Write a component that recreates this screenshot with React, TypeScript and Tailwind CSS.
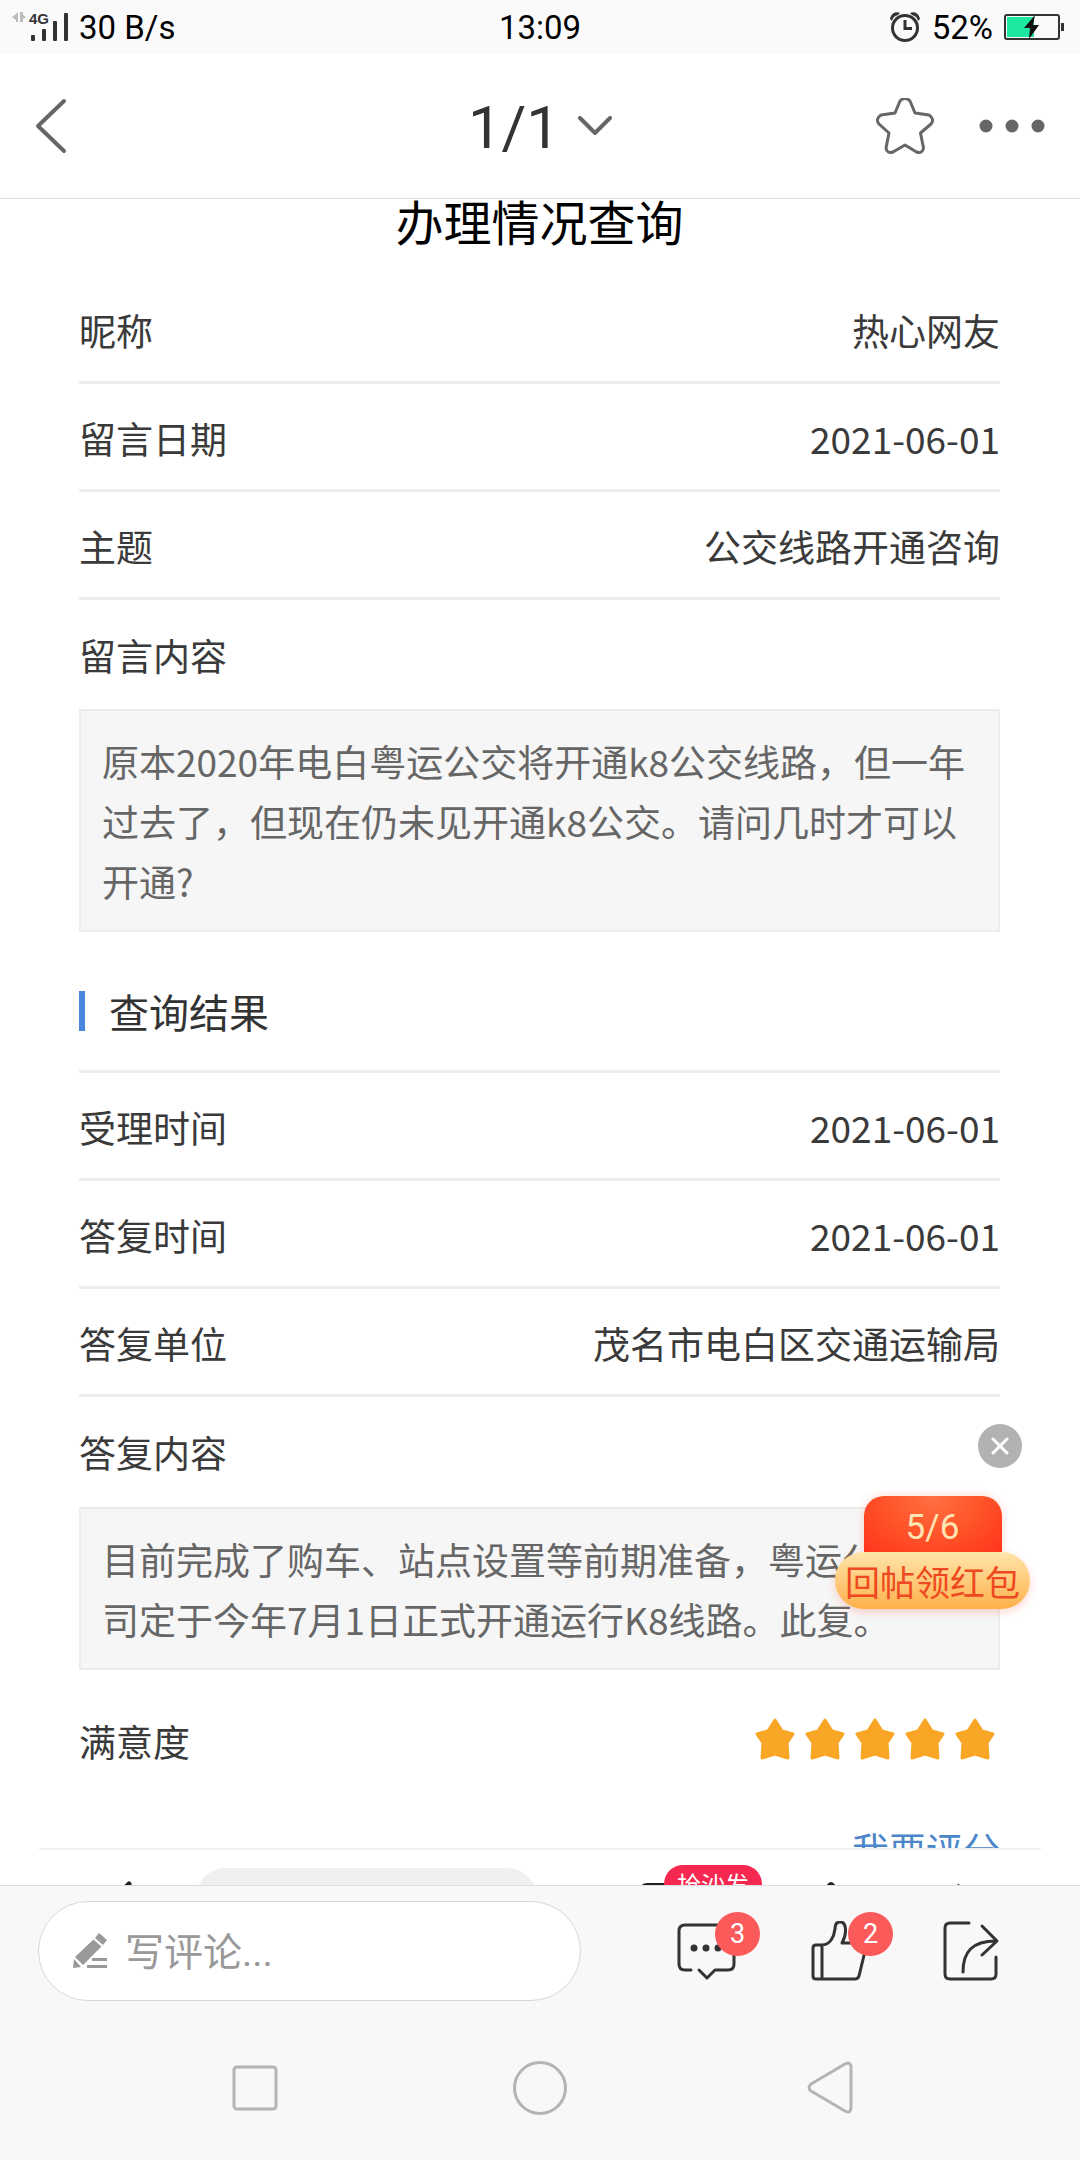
import { memo } from "react";

const queryFields = [
  { label: "昵称", value: "热心网友" },
  { label: "留言日期", value: "2021-06-01" },
  { label: "主题", value: "公交线路开通咨询" },
];

const resultFields = [
  { label: "受理时间", value: "2021-06-01" },
  { label: "答复时间", value: "2021-06-01" },
  { label: "答复单位", value: "茂名市电白区交通运输局" },
];

function StatusBar() {
  return (
    <div className="grid h-[54px] grid-cols-[1fr_auto_1fr] items-center bg-[#fafafa] text-[33px] leading-none text-black">
      <div className="flex items-center gap-[11px] pl-3">
        <svg width="56" height="34" viewBox="0 -2 56 34" fill="#333">
          <path d="M6 0v10H4V8L0 5l4-3zM8 0h3v3l3 2-3 2v3H8z" fill="#bbb" />
          <text x="17" y="12" className="font-['Liberation_Sans'] text-[15px] font-bold">
            4G
          </text>
          <rect x="19" y="23" width="4" height="6" rx="1" />
          <rect x="30" y="17" width="4" height="12" rx="1" />
          <rect x="41" y="9" width="4" height="20" rx="1" />
          <rect x="52" y="1" width="4" height="28" rx="1" />
        </svg>
        <span>30 B/s</span>
      </div>
      <span>13:09</span>
      <div className="flex items-center justify-end gap-[11px] pr-[15px]">
        <svg width="31" height="30" viewBox="0 0 31 30" fill="none" stroke="#333" strokeWidth="3">
          <circle cx="15" cy="16" r="12.5" />
          <path d="M15 8v8.5h7" />
          <path d="M0 7C1 2 5-1 10 1L8 3C5 4 3 5 2 9zM30 7C29 2 25-1 20 1l2 2c3 1 5 2 6 6z" fill="#333" stroke="none" />
        </svg>
        <span>52%</span>
        <svg width="61" height="26" viewBox="0 0 61 26">
          <rect x="1" y="1" width="54" height="24" rx="2" fill="none" stroke="#333" strokeWidth="2" />
          <path d="M3 3h27v20H3z" fill="#1deaa0" />
          <path d="M31 1 20 14h6l-1 11 10-14h-6z" fill="#111" />
          <rect x="57" y="9" width="3" height="8" fill="#333" />
        </svg>
      </div>
    </div>
  );
}

function Header() {
  return (
    <header className="grid h-[145px] grid-cols-[1fr_auto_1fr] items-center border-b border-[#dcdcdc] bg-white">
      <button aria-label="返回" className="justify-self-start pl-[35px]">
        <svg width="32" height="56" viewBox="0 0 32 56" fill="none" stroke="#666" strokeWidth="4" strokeLinecap="round" strokeLinejoin="round">
          <path d="M29 3 3 28l26 25" />
        </svg>
      </button>
      <button className="flex items-center gap-[18px] text-[60px] leading-none text-[#333]">
        <span className="pt-1">1/1</span>
        <svg width="34" height="20" viewBox="0 0 34 20" fill="none" stroke="#666" strokeWidth="4" strokeLinecap="round" strokeLinejoin="round">
          <path d="m2 2 15 15L32 2" />
        </svg>
      </button>
      <div className="flex items-center gap-[45px] justify-self-end pr-[35px]">
        <button aria-label="收藏">
          <svg width="58" height="57" viewBox="0 1 58 57" fill="none" stroke="#666" strokeWidth="3" strokeLinejoin="round">
            <path d="M24 4q5-5 10 0l5 12 14 2q6 4 2 9L44.500 36l3 15q-1 6-7 4L29 48l-12 7q-6 2-7-4l3-15L3 27q-4-5 2-9l14-2z" />
          </svg>
        </button>
        <button aria-label="更多">
          <svg width="66" height="14" viewBox="0 0 66 14" fill="#666">
            <circle cx="7" cy="7" r="6.500" />
            <circle cx="33" cy="7" r="6.500" />
            <circle cx="59" cy="7" r="6.500" />
          </svg>
        </button>
      </div>
    </header>
  );
}

function FieldRow({ label, value }: { label: string; value: string }) {
  return (
    <div className="flex h-[108px] items-center justify-between border-b-3 border-[#eee] pt-[2px]">
      <dt>{label}</dt>
      <dd>{value}</dd>
    </div>
  );
}

function MessageBox({ children }: { children: string }) {
  return (
    <p className="border-2 border-[#ececec] bg-[#f6f6f6] px-[21px] pt-5 pb-[19px] leading-[60px] text-[#666]">
      {children}
    </p>
  );
}

function RatingStar() {
  return (
    <svg width="40" height="42" viewBox="0 0 40 42" fill="#f9a626" stroke="#f9a626" strokeWidth="3" strokeLinejoin="round">
      <path d="m20 2 7 11 11 3-6 9 1 15-13-4-13 4 1-15-6-9 11-3z" />
    </svg>
  );
}

// Only the top edge of this toolbar shows above the comment bar
function PostToolbar() {
  return (
    <div className="mx-[39px] flex h-[37px] items-start overflow-hidden border-t-2 border-[#f0f0f0]">
      <svg className="mt-[31px] ml-[72px] shrink-0" width="21" height="34" viewBox="0 0 21 34" fill="none" stroke="#222" strokeWidth="5" strokeLinecap="round">
        <path d="M18 3 4 17l14 14" />
      </svg>
      <div className="mt-[18px] ml-16 h-[60px] grow rounded-full bg-[#f0f0f0]" />
      <div className="relative mt-[33px] ml-[102px] h-10 w-12 shrink-0 rounded-lg border-3 border-[#222]">
        <span className="absolute -top-[21px] left-[22px] w-[98px] rounded-full bg-[#f42850] text-center text-[24px] leading-[38px] text-white">
          抢沙发
        </span>
      </div>
      <svg className="mt-[31px] ml-[134px] shrink-0" width="20" height="30" viewBox="0 0 20 30" fill="none" stroke="#222" strokeWidth="4">
        <path d="M2 28 7 6q3-6 6 0l5 22" />
      </svg>
      <svg className="mt-[33px] mr-[72px] ml-[108px] shrink-0" width="20" height="30" viewBox="0 0 20 30" fill="none" stroke="#222" strokeWidth="4">
        <path d="m8 2 10 12" />
      </svg>
    </div>
  );
}

function RedPacket() {
  return (
    <aside className="absolute right-[50px] bottom-[276px] flex w-[195px] flex-col items-center">
      <button aria-label="关闭" className="mr-2 mb-7 flex size-11 items-center justify-center self-end rounded-full bg-[#b2b2b2]">
        <svg width="18" height="18" viewBox="0 0 18 18" stroke="#fff" strokeWidth="3" strokeLinecap="round">
          <path d="m2 2 14 14M16 2 2 16" />
        </svg>
      </button>
      <div className="h-14 w-[138px] rounded-t-[20px] bg-[radial-gradient(ellipse_at_50%_0%,#ff7043_0%,#ff5429_50%,#ff351c_100%)] pt-1 text-center font-[Roboto] text-[35px] leading-[56px] text-[#ffe5b4] shadow-[0_0_8px_#ff50303d]">
        5/6
      </div>
      <button className="h-[57px] w-full rounded-full bg-linear-to-b from-[#fee5a9] to-[#fdb046] text-[35px] leading-[57px] whitespace-nowrap text-[#ee4920] shadow-[0_3px_8px_#ff50303d]">
        回帖领红包
      </button>
    </aside>
  );
}

function CountBadge({ count }: { count: number }) {
  return (
    <span className="absolute -top-[9px] left-[38px] h-11 w-[45px] rounded-full bg-[#fa5a5a] text-center text-[27px] leading-[44px] text-white">
      {count}
    </span>
  );
}

function CommentBar() {
  return (
    <footer className="flex items-center border-t border-[#dedede] bg-[#f9f7f8] py-[15px] pr-[77px] pl-[38px]">
      <label className="mr-24 flex h-[100px] min-w-0 flex-1 items-center gap-[17px] rounded-full border border-[#d5dad5] bg-white px-[34px]">
        <svg className="shrink-0" width="35" height="36" viewBox="0 0 35 36" fill="#999">
          <path d="m26 0 8 7-4 5-8-7zM20.500 6.500l8 7L10 32l-8-8zM1 26l7 8-8 1zM19 25h15v3H19zM14 32h20v3H14z" />
        </svg>
        <input
          aria-label="写评论"
          placeholder="写评论..."
          className="w-full min-w-0 pt-1 text-[39px] outline-none placeholder:text-[#999]"
        />
      </label>
      <div className="flex items-center gap-[73px]">
        <button aria-label="评论" className="relative">
          <svg width="60" height="60" viewBox="0 0 60 60" fill="none" stroke="#333" strokeWidth="3" strokeLinecap="round" strokeLinejoin="round">
            <path d="M14 49H8q-6 0-6-6V10q0-6 6-6h43q6 0 6 6v33q0 6-6 6H38l-8 8-8-8" />
            <g fill="#333" stroke="none">
              <circle cx="17" cy="27" r="3.500" />
              <circle cx="29" cy="27" r="3.500" />
              <circle cx="41" cy="27" r="3.500" />
            </g>
          </svg>
          <CountBadge count={3} />
        </button>
        <button aria-label="点赞" className="relative">
          <svg width="60" height="60" viewBox="0 0 60 60" fill="none" stroke="#333" strokeWidth="3" strokeLinecap="round" strokeLinejoin="round">
            <path d="M12 24v34M12 24H6q-3 0-3 3v28q0 3 3 3h39q3 0 4-3l7-29q0-4-4-4H32c5-9 5-21-2-21-4 0-5 3-5 7-1 8-5 16-13 16" />
          </svg>
          <CountBadge count={2} />
        </button>
        <button aria-label="分享">
          <svg width="60" height="60" viewBox="0 0 60 60" fill="none" stroke="#333" strokeWidth="3" strokeLinecap="round" strokeLinejoin="round">
            <path d="M26 2H7Q2 2 2 7v46q0 5 5 5h41q5 0 5-5V36M20 51c0-20 9-31 33-31M39 5l15 15-15 14" />
          </svg>
        </button>
      </div>
    </footer>
  );
}

function SystemNav() {
  return (
    <nav className="flex h-36 items-center justify-between bg-[#f8f8f8] px-[226px]">
      <button aria-label="最近任务">
        <svg width="58" height="58" viewBox="0 0 58 58" fill="none" stroke="#b4b4b4" strokeWidth="3">
          <rect x="8" y="8" width="42" height="42" rx="3" />
        </svg>
      </button>
      <button aria-label="主屏幕">
        <svg width="58" height="58" viewBox="0 0 58 58" fill="none" stroke="#b4b4b4" strokeWidth="3">
          <circle cx="29" cy="29" r="25.500" />
        </svg>
      </button>
      <button aria-label="后退">
        <svg width="58" height="58" viewBox="0 0 58 58" fill="none" stroke="#b4b4b4" strokeWidth="3" strokeLinejoin="round">
          <path d="M49 5q6-3 6 4v39q0 7-6 4L15 32q-4-3 0-7z" />
        </svg>
      </button>
    </nav>
  );
}

function App() {
  return (
    <div className="min-h-screen bg-white font-[Roboto,'Noto_Sans_CJK_SC',sans-serif]">
      <StatusBar />
      <Header />
      <main className="relative overflow-hidden font-['Noto_Sans_CJK_SC',sans-serif]">
        <article className="pr-20 pl-[79px] text-[37px] leading-[56px] text-[#3a3a3a]">
          <h1 className="mb-[35px] text-center text-[48px] leading-[42px] text-black">办理情况查询</h1>
          <dl>
            {queryFields.map((field) => (
              <FieldRow key={field.label} {...field} />
            ))}
          </dl>
          <h3 className="flex h-[109px] items-center">留言内容</h3>
          <MessageBox>
            原本2020年电白粤运公交将开通k8公交线路，但一年过去了，但现在仍未见开通k8公交。请问几时才可以开通?
          </MessageBox>
          <h2 className="flex h-[141px] items-center gap-6 border-b-3 border-[#eee] pt-5 text-[40px] text-[#333]">
            <span className="h-10 w-[6px] bg-[#4a86dc]" />
            查询结果
          </h2>
          <dl>
            {resultFields.map((field) => (
              <FieldRow key={field.label} {...field} />
            ))}
          </dl>
          <h3 className="flex h-[110px] items-center">答复内容</h3>
          <MessageBox>
            目前完成了购车、站点设置等前期准备，粤运公交公司定于今年7月1日正式开通运行K8线路。此复。
          </MessageBox>
          <div className="flex h-[142px] items-center justify-between">
            <span>满意度</span>
            <span role="img" aria-label="五星" className="flex gap-[10px] pr-[5px] pb-1">
              {[1, 2, 3, 4, 5].map((n) => (
                <RatingStar key={n} />
              ))}
            </span>
          </div>
          <div className="h-9 overflow-hidden text-right leading-[74px]">
            <a href="#rate" className="text-[#4a86c8]">
              我要评分
            </a>
          </div>
        </article>
        <PostToolbar />
        <RedPacket />
      </main>
      <CommentBar />
      <SystemNav />
    </div>
  );
}

export default memo(App);
